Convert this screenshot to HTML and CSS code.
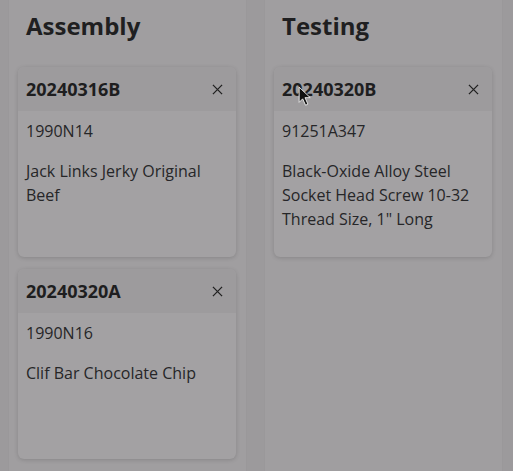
FILE: index.html
```html
<!DOCTYPE html>
<html>
<head>
<meta charset="utf-8">
<link rel="stylesheet" href="styles.css">
</head>
<body>
<div class="board">
  <section class="column">
    <h2 class="column-title">Assembly</h2>
    <div class="card">
      <div class="card-header">
        <span class="card-id">20240316B</span>
        <svg class="close" viewBox="0 0 12 12"><path d="M1 1L11 11M11 1L1 11"/></svg>
      </div>
      <div class="card-body">
        <div class="part">1990N14</div>
        <div class="desc">Jack Links Jerky Original Beef</div>
      </div>
    </div>
    <div class="card">
      <div class="card-header">
        <span class="card-id">20240320A</span>
        <svg class="close" viewBox="0 0 12 12"><path d="M1 1L11 11M11 1L1 11"/></svg>
      </div>
      <div class="card-body">
        <div class="part">1990N16</div>
        <div class="desc">Clif Bar Chocolate Chip</div>
      </div>
    </div>
  </section>
  <section class="column">
    <h2 class="column-title">Testing</h2>
    <div class="card">
      <div class="card-header">
        <span class="card-id">20240320B</span>
        <svg class="close" viewBox="0 0 12 12"><path d="M1 1L11 11M11 1L1 11"/></svg>
      </div>
      <div class="card-body">
        <div class="part">91251A347</div>
        <div class="desc">Black-Oxide Alloy Steel Socket Head Screw 10-32 Thread Size, 1" Long</div>
      </div>
    </div>
  </section>
</div>
<svg class="cursor" viewBox="0 0 12 18"><path d="M1 1L1 14L4 11L6.5 16.5L8.5 15.5L6 10L10.5 10Z"/></svg>
</body>
</html>
```

FILE: styles.css
```css
html, body {
  margin: 0;
  padding: 0;
  height: 100%;
}
body {
  background: #9c9a9c;
  font-family: "Open Sans", "Noto Sans", sans-serif;
  color: #262628;
  overflow: hidden;
}
.board {
  display: flex;
  gap: 17px;
  padding: 0 8px;
  height: 100%;
}
.column {
  width: 218px;
  padding: 0 10px 0 9px;
  background: #a09ea0;
  border-left: 1px solid #9a989a;
  border-right: 1px solid #9a989a;
  display: flex;
  flex-direction: column;
  gap: 12px;
}
.column-title {
  margin: 10px 0 13px 8px;
  font-size: 24px;
  line-height: 32px;
  font-weight: 700;
  color: #1f1f21;
}
.card {
  background: #a3a1a3;
  border-radius: 6px;
  box-shadow: 0 1px 4px rgba(0,0,0,0.16);
  min-height: 190px;
  overflow: hidden;
}
.card-header {
  display: flex;
  align-items: center;
  justify-content: space-between;
  padding: 10px 13px 10px 8px;
  background: #9d9b9d;
  height: 24px;
}
.card-id {
  font-size: 18px;
  line-height: 24px;
  font-weight: 700;
  color: #1e1e20;
}
.close {
  width: 11px;
  height: 11px;
  fill: none;
  stroke: #222;
  stroke-width: 1.4;
}
.card-body {
  padding: 8px;
  font-size: 16px;
  line-height: 24px;
}
.desc {
  margin-top: 16px;
}
.cursor {
  position: absolute;
  left: 298px;
  top: 86px;
  width: 14px;
  height: 21px;
  fill: #111;
  stroke: #eee;
  stroke-width: 0.8;
}
```
